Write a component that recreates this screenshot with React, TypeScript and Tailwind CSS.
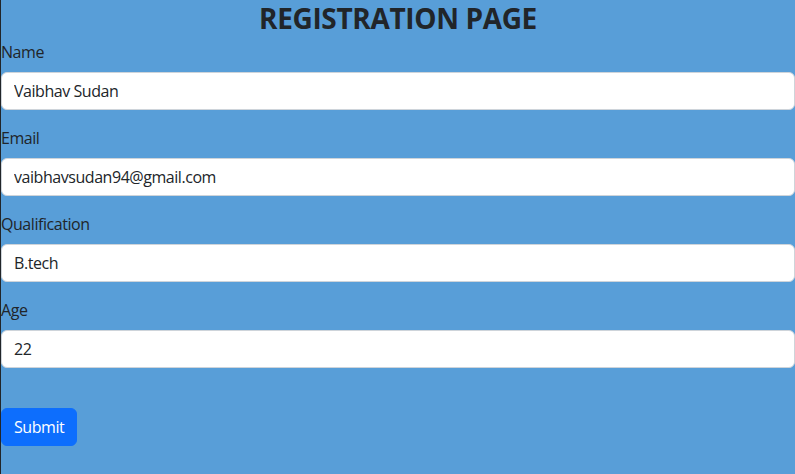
const fields = [
  { label: 'Name', value: 'Vaibhav Sudan' },
  { label: 'Email', value: 'vaibhavsudan94@gmail.com' },
  { label: 'Qualification', value: 'B.tech' },
  { label: 'Age', value: '22' },
]

export default function App() {
  return (
    <div
      className="min-h-[474px] w-full border-l border-[#212529] bg-[#589ed8] tracking-[-0.45px] text-[#212529]"
      style={{ fontFamily: '"Open Sans", "Noto Sans", sans-serif' }}
    >
      <h1 className="h-10 pt-[1px] text-center text-[28px] font-bold leading-[34px] tracking-[-0.35px]">
        REGISTRATION PAGE
      </h1>
      <form>
        {fields.map((f) => (
          <div key={f.label} className="mb-4">
            <label className="mb-2 block text-base leading-6">{f.label}</label>
            <input
              type="text"
              defaultValue={f.value}
              className="block h-[38px] w-full rounded-md border border-[#ced4da] bg-white px-3 text-base leading-6 tracking-[-0.45px] text-[#212529] outline-none"
            />
          </div>
        ))}
        <div className="pt-6">
          <button
            type="submit"
            className="h-[38px] rounded-md border border-[#0d6efd] bg-[#0d6efd] px-3 text-base leading-6 tracking-[-0.45px] text-white"
          >
            Submit
          </button>
        </div>
      </form>
    </div>
  )
}
